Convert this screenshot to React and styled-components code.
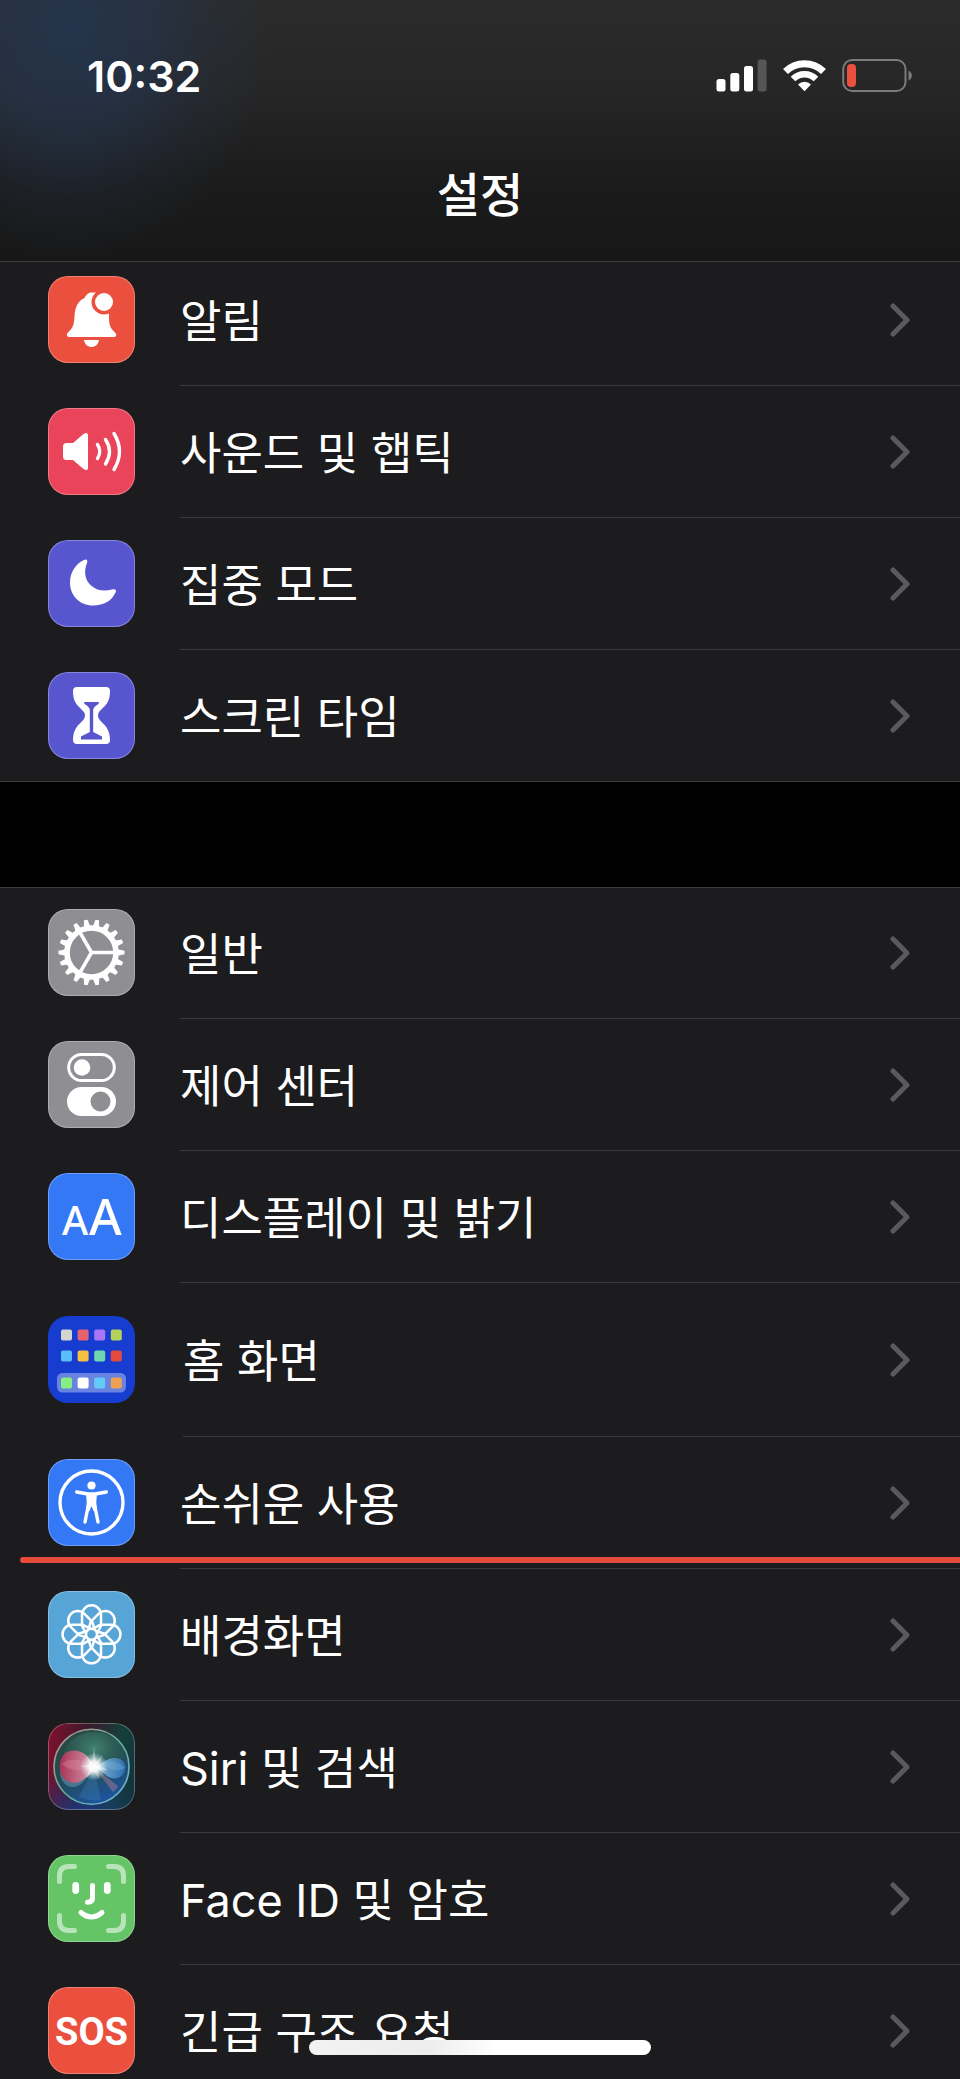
import React from "react";
import styled, { createGlobalStyle, css } from "styled-components";

const gearTeeth = Array.from({ length: 18 }, (_, i) => i * 20);
const petals = Array.from({ length: 8 }, (_, i) => i * 45);

const homeApps = [
	["#d5d5cf", "#e9606f", "#ab76f5", "#b4d25a"],
	["#5bbdf7", "#f6c143", "#70d6b0", "#e44b3f"],
	["#86ef84", "#ffffff", "#62cbf9", "#f0a055"],
];

function BellIcon() {
	return (
		<Glyph>
			<path
				fill="#fff"
				d="M43.5 16.5C40 16.5 38 19 36.5 22C30 25 27 31 26.5 40C26 50 24.5 52 20.5 56C17.5 59 19 61 22 61H65C68.5 61 69.5 59 66.5 56C62.5 52 61 50 61 40V30L48 16.5Z"
			/>
			<path fill="#fff" d="M36 64H51C50 69 47 71 43.5 71C40 71 37 69 36 64Z" />
			<circle cx="56" cy="26" r="12.5" fill="#eb4f3d" />
			<circle cx="56" cy="26" r="9" fill="#fff" />
		</Glyph>
	);
}

function SoundIcon() {
	return (
		<Glyph>
			<path
				fill="#fff"
				d="M18.5 35H25L35.5 26Q40 23 40 28V59Q40 64 35.5 61L25 52H18.5Q15 52 15 48.5V38.5Q15 35 18.5 35Z"
			/>
			<g fill="none" stroke="#fff" strokeWidth="3.4" strokeLinecap="round">
				<path d="M49.5 36.5Q54 43.5 49.5 50.5" />
				<path d="M57.5 31.5Q65.5 43.5 57.5 56" />
				<path d="M66 25.5Q77 43.5 66 61.5" />
			</g>
		</Glyph>
	);
}

function MoonIcon() {
	return (
		<Glyph>
			<path
				fill="#fff"
				d="M36 20C39 18.5 40 20.5 39 23C35.5 32 37 40 43 45.5C49 51 57 51.5 64 49.5C67 48.5 69 50 67.5 52.5C64 60.5 56 65.5 45 65.5C32 65.5 22 56 22 42.5C22 32 28 23.5 36 20Z"
			/>
		</Glyph>
	);
}

function HourglassIcon() {
	return (
		<Glyph>
			<path
				fill="#fff"
				d="M29 15H58Q62 15 62 19C62 32 56 34 51 40Q49 43.5 51 47C56 53 62 56 62 68Q62 72 58 72H29Q25 72 25 68C25 56 31 53 36 47Q38 43.5 36 40C31 34 25 32 25 19Q25 15 29 15Z"
			/>
			<path fill="#5856ce" d="M36 30H51L50.5 32Q45.2 35 45.2 38V60L54 64.5V67.5H33V64.5L41.8 60V38Q41.8 35 36.5 32Z" />
		</Glyph>
	);
}

function GearIcon() {
	return (
		<Glyph>
			<g transform="translate(43.5 43.5)">
				<circle r="24.5" fill="none" stroke="#fff" strokeWidth="5.6" />
				{gearTeeth.map((angle) => (
					<path key={angle} fill="#fff" d="M26 -3.2L33 -1.8V1.8L26 3.2Z" transform={`rotate(${angle})`} />
				))}
				<path stroke="#fff" strokeWidth="3.6" d="M0 0H24M0 0L-12 -20.8M0 0L-12 20.8" />
			</g>
		</Glyph>
	);
}

function TogglesIcon() {
	return (
		<Glyph>
			<rect x="20.7" y="13.5" width="45.6" height="26" rx="13" fill="none" stroke="#fff" strokeWidth="3" />
			<circle cx="34" cy="26.5" r="8.3" fill="#fff" />
			<rect x="19" y="46" width="49" height="29" rx="14.5" fill="#fff" />
			<circle cx="52.5" cy="60.5" r="10" fill="#8e8e93" />
		</Glyph>
	);
}

function TextSizeIcon() {
	return (
		<Glyph>
			<LetterA x="14" y="62" size={40}>
				A
			</LetterA>
			<LetterA x="41" y="62" size={50}>
				A
			</LetterA>
		</Glyph>
	);
}

function HomeScreenIcon() {
	return (
		<Glyph>
			<rect x="9" y="57" width="69" height="19.5" rx="5.5" fill="#6883e0" />
			{homeApps.map((row, r) =>
				row.map((color, c) => (
					<rect key={color} x={13 + c * 16.6} y={[13.5, 34.5, 61.5][r]} width="11" height="11" rx="2" fill={color} />
				))
			)}
		</Glyph>
	);
}

function AccessibilityIcon() {
	return (
		<Glyph>
			<circle cx="43.5" cy="43.5" r="31.5" fill="none" stroke="#fff" strokeWidth="3.4" />
			<circle cx="43.5" cy="26.5" r="4.1" fill="#fff" />
			<path fill="#fff" d="M38 34.5H49L48.3 43L49 52H45.5L43.5 47L41.5 52H38L38.7 43Z" />
			<g fill="none" stroke="#fff" strokeWidth="3.4" strokeLinecap="round" strokeLinejoin="round">
				<path d="M28.7 33L40 35H47L58.3 33" />
				<path d="M40 48L37 63" />
				<path d="M47 48L50 63" />
			</g>
		</Glyph>
	);
}

function FlowerIcon() {
	return (
		<Glyph>
			<g transform="translate(43.5 43.3)" fill="none" stroke="#fff" strokeWidth="2.5" strokeLinejoin="round">
				{petals.map((angle) => (
					<path key={angle} d="M0 -5L-9.5 -10V-19.5A9.5 9.5 0 0 1 9.5 -19.5V-10Z" transform={`rotate(${angle})`} />
				))}
				<circle r="5.5" fill="#57a5d6" />
			</g>
		</Glyph>
	);
}

function SiriIcon() {
	return (
		<Glyph>
			<defs>
				<linearGradient id="siriRim" x1="0" y1="0" x2="1" y2="1">
					<stop offset="0" stopColor="#c98a94" />
					<stop offset="0.5" stopColor="#5fae93" />
					<stop offset="1" stopColor="#7fb4dd" />
				</linearGradient>
				<linearGradient id="siriBall" x1="0.2" y1="0" x2="0.6" y2="1">
					<stop offset="0" stopColor="#2b4a45" />
					<stop offset="0.5" stopColor="#23484c" />
					<stop offset="1" stopColor="#1c56a0" />
				</linearGradient>
				<radialGradient id="siriGreen" cx="0.5" cy="0.3" r="0.6">
					<stop offset="0" stopColor="#4f9b82" stopOpacity="0.7" />
					<stop offset="1" stopColor="#2b6a5c" stopOpacity="0.1" />
				</radialGradient>
				<linearGradient id="siriPink" x1="0" y1="0" x2="1" y2="0">
					<stop offset="0" stopColor="#b32d52" />
					<stop offset="1" stopColor="#e7a1b6" />
				</linearGradient>
				<linearGradient id="siriBlue" x1="0" y1="0" x2="1" y2="0">
					<stop offset="0" stopColor="#b4dbf5" />
					<stop offset="1" stopColor="#2b78c4" />
				</linearGradient>
				<radialGradient id="siriGlow">
					<stop offset="0" stopColor="#fff" />
					<stop offset="0.35" stopColor="#fff" stopOpacity="0.9" />
					<stop offset="1" stopColor="#cfeeee" stopOpacity="0" />
				</radialGradient>
			</defs>
			<circle cx="43.5" cy="43.7" r="37.5" fill="url(#siriBall)" stroke="url(#siriRim)" strokeWidth="1.6" />
			<ellipse cx="46" cy="36" rx="31" ry="27" fill="url(#siriGreen)" />
			<path d="M46 44L31 74Q43 79 53 77Z" fill="#4a8ed0" opacity="0.25" />
			<path d="M46 44L65 69Q69 66 70 63Z" fill="#b97d9a" opacity="0.45" />
			<path d="M46 43C38 57 32 65 23 64C13 62 10 50 13 40C16 31 30 29 38 36Z" fill="#6eaac9" opacity="0.45" />
			<path
				d="M47 44C41 53 34 60 25 60C14 59 9 46 13 36C17 26 30 25 38 32C42 36 45 41 47 44Z"
				fill="url(#siriPink)"
				opacity="0.9"
			/>
			<path d="M14 41C21 34 34 36 46 44C34 50 22 48 14 41Z" fill="#e48ba2" opacity="0.35" />
			<path d="M46 44C53 42 58 35 66 35C75 35 79 41 77 47C75 55 66 58 59 53C55 50 51 46 46 44Z" fill="url(#siriBlue)" opacity="0.75" />
			<path d="M57 40C64 37 72 39 77 45C69 50 60 47 57 40Z" fill="#8fcdf3" opacity="0.25" />
			<circle cx="46" cy="43.5" r="14" fill="url(#siriGlow)" />
			<path
				d="M46 24L48 39L55 32L50 42L60 47L50 47L51 56L46 48L38 55L42 46L32 43L42 41L37 32L44 39Z"
				fill="#fff"
				opacity="0.35"
			/>
		</Glyph>
	);
}

function FaceIdIcon() {
	return (
		<Glyph>
			<g fill="none" stroke="#fff" strokeWidth="5" strokeLinecap="round">
				<path
					opacity="0.55"
					d="M11.5 26.5V21Q11.5 11.5 21 11.5H26.5M60.5 11.5H66Q75.5 11.5 75.5 21V26.5M75.5 60.5V66Q75.5 75.5 66 75.5H60.5M26.5 75.5H21Q11.5 75.5 11.5 66V60.5"
				/>
				<path strokeWidth="6.8" d="M27.7 30.5V35.5M59.3 30.5V35.5" />
				<path d="M44.5 30.5V43Q44.5 47.3 39.5 47.3" />
				<path d="M33 57.5Q43.5 66.5 54 57.5" />
			</g>
		</Glyph>
	);
}

function SosIcon() {
	return (
		<Glyph>
			<SosText x="43.5" y="58">
				SOS
			</SosText>
		</Glyph>
	);
}

function Chevron() {
	return (
		<ChevronSvg viewBox="0 0 20 34" aria-hidden="true">
			<path d="M3 3L17 17L3 31" />
		</ChevronSvg>
	);
}

const siriBackground =
	"radial-gradient(circle at 40% 110%, #1b3a86 0%, transparent 50%), linear-gradient(100deg, #85102f 0%, #3a1a2c 40%, #14403a 75%, #12303f 100%)";

const alertItems = [
	{ label: "알림", color: "#eb4f3d", Icon: BellIcon },
	{ label: "사운드 및 햅틱", color: "#ea445a", Icon: SoundIcon },
	{ label: "집중 모드", color: "#5856ce", Icon: MoonIcon },
	{ label: "스크린 타임", color: "#5856ce", Icon: HourglassIcon },
];

const generalItems = [
	{ label: "일반", color: "#8e8e93", Icon: GearIcon },
	{ label: "제어 센터", color: "#8e8e93", Icon: TogglesIcon },
	{ label: "디스플레이 및 밝기", color: "#3478f6", Icon: TextSizeIcon },
	{ label: "홈 화면", color: "#173dd0", Icon: HomeScreenIcon, tall: true },
	{ label: "손쉬운 사용", color: "#3478f6", Icon: AccessibilityIcon, marked: true },
	{ label: "배경화면", color: "#57a5d6", Icon: FlowerIcon },
	{ label: "Siri 및 검색", color: siriBackground, Icon: SiriIcon },
	{ label: "Face ID 및 암호", color: "#65c466", Icon: FaceIdIcon },
	{ label: "긴급 구조 요청", color: "#eb4f3d", Icon: SosIcon },
];

function SettingsGroup({ items }) {
	return (
		<Group>
			{items.map(({ label, color, Icon, tall, marked }) => (
				<Item key={label} $marked={marked}>
					<RowButton type="button" $tall={tall}>
						<Tile $color={color} $flat={tall}>
							<Icon />
						</Tile>
						<RowBody>
							<Label>{label}</Label>
							<Chevron />
						</RowBody>
					</RowButton>
				</Item>
			))}
		</Group>
	);
}

export default function App() {
	return (
		<Screen>
			<GlobalStyle />
			<Header>
				<StatusBar>
					<Time>10:32</Time>
					<StatusIcons>
						<svg width="51" height="33" viewBox="0 0 51 33" fill="#fff" role="img" aria-label="신호 세기">
							<rect x="0.5" y="20" width="9" height="12.5" rx="2.5" />
							<rect x="14.3" y="14" width="9" height="18.5" rx="2.5" />
							<rect x="28" y="7" width="9" height="25.5" rx="2.5" />
							<rect x="41.6" y="0.5" width="9" height="32" rx="2.5" fill="#565658" />
						</svg>
						<svg width="43" height="33" viewBox="0 0 43 33" fill="none" stroke="#fff" role="img" aria-label="Wi-Fi">
							<path strokeWidth="7" d="M2.5 12.5A27 27 0 0 1 40.5 12.5" />
							<path strokeWidth="6.5" d="M10 20A16.3 16.3 0 0 1 33 20" />
							<path fill="#fff" stroke="none" d="M15 25.5A9.2 9.2 0 0 1 28 25.5L21.5 32.2Z" />
						</svg>
						<svg width="70" height="33" viewBox="0 0 70 33" fill="none" role="img" aria-label="배터리">
							<rect x="1.2" y="1" width="62.3" height="31" rx="9" stroke="#7b7b7d" strokeWidth="2" />
							<rect x="5" y="5" width="9" height="23" rx="4" fill="#eb4f3d" />
							<path d="M66.5 11.5C71 13.5 71 19.5 66.5 21.5Z" fill="#7b7b7d" />
						</svg>
					</StatusIcons>
				</StatusBar>
				<Title>설정</Title>
			</Header>
			<Content>
				<SettingsGroup items={alertItems} />
				<SettingsGroup items={generalItems} />
			</Content>
			<HomeIndicator />
		</Screen>
	);
}

const GlobalStyle = createGlobalStyle`
	* {
		box-sizing: border-box;
		margin: 0;
		padding: 0;
	}

	body {
		background-color: #000;
		color: #fff;
		font-family: "Inter", "Noto Sans CJK KR", sans-serif;
	}
`;

const Screen = styled.div`
	position: relative;
	display: flex;
	flex-direction: column;
	height: 100vh;
	overflow: hidden;
`;

const Header = styled.header`
	flex: none;
	padding-bottom: 22px;
	border-bottom: 1px solid #3d3d40;
	background: radial-gradient(
			ellipse 200px 230px at 70px 30px,
			rgba(36, 54, 80, 0.85) 0%,
			rgba(36, 54, 80, 0.65) 35%,
			rgba(36, 54, 80, 0.2) 75%,
			transparent 100%
		),
		linear-gradient(#2b2b2c 0%, #262627 35%, #1b1b1b 70%, #171717 100%);
`;

const StatusBar = styled.div`
	display: flex;
	align-items: center;
	justify-content: space-between;
	height: 151px;
	padding: 0 48px 0 87px;
`;

const Time = styled.time`
	font-size: 43px;
	font-weight: 600;
	line-height: 52px;
`;

const StatusIcons = styled.div`
	display: flex;
	align-items: center;
	gap: 16px;
`;

const Title = styled.h1`
	font-size: 47px;
	font-weight: 500;
	line-height: 88px;
	text-align: center;
`;

const Content = styled.main`
	flex: 1;
	min-height: 0;
	overflow-y: auto;
	scrollbar-width: none;
`;

const Group = styled.ul`
	list-style: none;
	background-color: #1c1c1e;

	&:first-child {
		margin-top: -8px;
		box-shadow: inset 0 -1px #3d3d40;
	}

	& + & {
		margin-top: 105px;
		box-shadow: inset 0 1px #3d3d40;
	}
`;

const Item = styled.li`
	position: relative;

	${(props) =>
		props.$marked &&
		css`
			&::after {
				content: "";
				position: absolute;
				left: 20px;
				right: 0;
				bottom: 6px;
				height: 6px;
				border-radius: 3px 0 0 3px;
				background-color: #e74b3c;
			}
		`}
`;

const RowButton = styled.button`
	display: flex;
	align-items: center;
	gap: ${(props) => (props.$tall ? "48px" : "45px")};
	width: 100%;
	height: ${(props) => (props.$tall ? "154px" : "132px")};
	padding-left: 48px;
	border: none;
	background: none;
	color: inherit;
	font: inherit;
	text-align: left;
	cursor: pointer;
`;

const RowBody = styled.span`
	flex: 1;
	display: flex;
	align-items: center;
	justify-content: space-between;
	height: 100%;
	padding-right: 50px;
	border-bottom: 1px solid #3a3a3c;

	${Item}:last-child & {
		border-bottom-color: transparent;
	}
`;

const Label = styled.span`
	padding-top: 4px;
	font-size: 45px;
	line-height: 60px;
	white-space: nowrap;
`;

const ChevronSvg = styled.svg`
	flex: none;
	width: 20px;
	height: 34px;
	fill: none;
	stroke: #5a5a5e;
	stroke-width: 5px;
	stroke-linecap: round;
	stroke-linejoin: round;
`;

const Tile = styled.span`
	flex: none;
	width: 87px;
	height: 87px;
	margin-bottom: 1px;
	border-radius: 20px;
	overflow: hidden;
	background: ${(props) => props.$color};
	box-shadow: ${(props) => (props.$flat ? "none" : "inset 0 0 0 1px rgba(255, 255, 255, 0.28)")};
`;

const Glyph = styled.svg.attrs({ viewBox: "0 0 87 87", "aria-hidden": true })`
	display: block;
	width: 100%;
	height: 100%;
`;

const LetterA = styled.text`
	fill: #fff;
	font-family: "Noto Sans", sans-serif;
	font-size: ${(props) => props.size}px;
	font-weight: 500;
`;

const SosText = styled.text`
	fill: #fff;
	font-family: "Liberation Sans Narrow", "Roboto", sans-serif;
	font-size: 38px;
	font-weight: 700;
	text-anchor: middle;
`;

const HomeIndicator = styled.div`
	position: absolute;
	left: 50%;
	bottom: 24px;
	width: 342px;
	height: 15px;
	margin-left: -171px;
	border-radius: 8px;
	background: linear-gradient(90deg, #f2f2f3 0%, #ededee 35%, #fff 55%);
`;
